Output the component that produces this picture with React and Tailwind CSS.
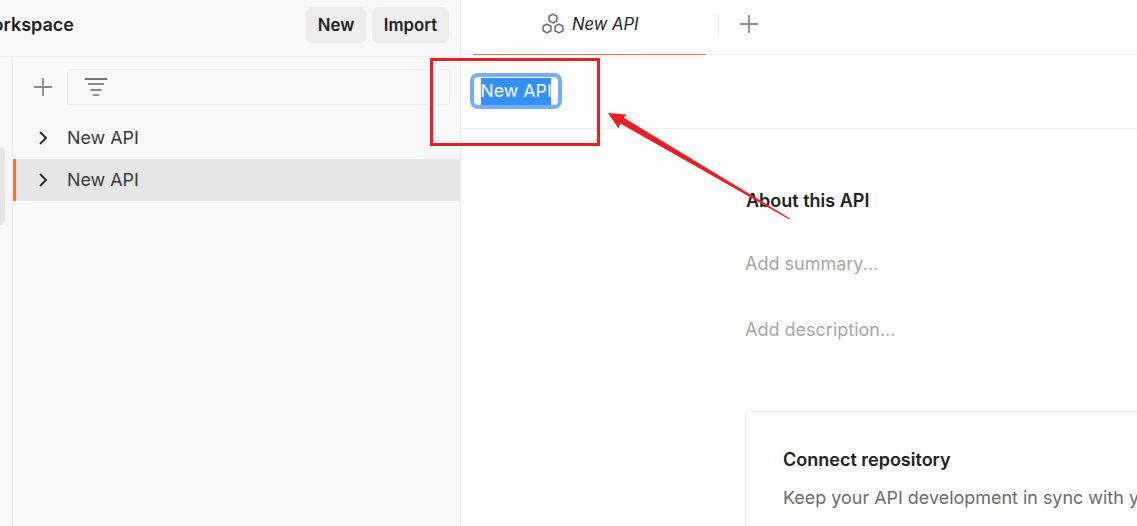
function Plus() {
  return (
    <svg className="block size-5 shrink-0" viewBox="0 0 20 20" fill="none" stroke="#8a8a8a" strokeWidth="1.8">
      <path d="M10 1v18M1 10h18" />
    </svg>
  );
}

function FilterIcon() {
  return (
    <svg className="block h-5 w-[22px]" viewBox="0 0 22 20" fill="#8a8a8a">
      <path d="M0 1h22v2H0z" fill="#747474" />
      <path d="M3 6h16v2H3zM5.5 12h11v2h-11z" />
      <path d="M8 17.3h6V19H8z" />
    </svg>
  );
}

function ApiIcon() {
  return (
    <svg className="block h-[21px] w-[22px] shrink-0" viewBox="0 0 22 21" fill="none" stroke="#6b6b6b" strokeWidth="1.5">
      <path d="M11 1.2l3.9 2.1v4.4L11 9.8 7.1 7.7V3.3z" />
      <path d="M5 11.2l3.9 2.1v4.4L5 19.8l-3.9-2.1v-4.4z" />
      <path d="M17 11.2l3.9 2.1v4.4L17 19.8l-3.9-2.1v-4.4z" />
    </svg>
  );
}

function TreeRow({ label, selected }) {
  return (
    <div
      className={
        selected
          ? "flex h-[42px] items-center border-l-[3px] border-[#ff6c37] bg-[#e6e6e6] pl-[22px]"
          : "flex h-[42px] items-center pl-[25px]"
      }
    >
      <svg className="block h-[14px] w-[10px]" viewBox="0 0 10 14" fill="none" stroke="#2a2a2a" strokeWidth="1.9">
        <path d="M2 1l6 6-6 6" />
      </svg>
      <span className="ml-[19px] text-[17.9px] text-[#3a3a3a]">{label}</span>
    </div>
  );
}

function Sidebar() {
  return (
    <aside className="flex w-[461px] shrink-0 flex-col border-r border-[#ededed] bg-[#f9f9f9]">
      <header className="flex h-[57px] shrink-0 items-start justify-between border-b border-[#ededed] pr-[11px] pt-[7px]">
        <div className="flex h-9 w-[74px] items-center justify-end overflow-hidden whitespace-nowrap font-semibold">
          orkspace
        </div>
        <div className="flex gap-1.5">
          <button className="h-9 w-[60px] rounded-md bg-[#ededed] text-[16.8px] font-semibold">New</button>
          <button className="h-9 w-[77px] rounded-md bg-[#ededed] text-[16.8px] font-semibold">Import</button>
        </div>
      </header>
      <div className="flex grow">
        <div className="w-[13px] shrink-0 border-r border-[#ededed] pt-[90px]">
          <div className="h-[78px] w-[5px] rounded-r-md bg-[#e6e6e6]" />
        </div>
        <div className="grow">
          <div className="flex h-[60px] items-center pl-5 pr-[10px]">
            <Plus />
            <div className="ml-[14px] flex h-9 grow items-center rounded-[3px] border border-[#ededed] pl-[17px]">
              <FilterIcon />
            </div>
          </div>
          <TreeRow label="New API" />
          <TreeRow label="New API" selected />
        </div>
      </div>
    </aside>
  );
}

function Editor() {
  return (
    <main className="flex min-w-0 grow flex-col bg-white">
      <div className="flex h-[55px] shrink-0 border-b border-[#ededed] pl-3">
        <div className="-mb-px flex w-[233px] items-start border-b border-[#ff6c37] pl-[69px] pt-[13px]">
          <ApiIcon />
          <span className="-mt-px ml-2 h-6 text-[16.6px] leading-6 italic">New API</span>
        </div>
        <div className="ml-3 mt-[13px] h-6 w-px bg-[#ededed]" />
        <div className="ml-5 mt-[14px]">
          <Plus />
        </div>
      </div>
      <div className="flex h-[74px] shrink-0 items-start border-b border-[#ededed] pl-[9px] pt-[18px]">
        <div className="flex h-9 w-[92px] items-center justify-center rounded-lg border-4 border-[#74aef6]">
          <span className="flex h-[27px] w-[70px] items-center justify-center whitespace-nowrap bg-[#3390ff] text-[17.8px] text-white">
            New API
          </span>
        </div>
      </div>
      <div className="flex grow flex-col overflow-hidden pl-[284px] pt-[60px]">
        <h2 className="h-6 pl-px font-semibold leading-6">About this API</h2>
        <p className="mt-[39px] h-6 leading-6 text-[#a6a6a6]">Add summary...</p>
        <p className="mt-[42px] h-6 leading-6 text-[#a6a6a6]">Add description...</p>
        <section className="mt-[69px] h-[180px] w-[600px] shrink-0 rounded-[5px] border border-[#ededed] pl-[37px] pt-9">
          <h3 className="h-6 font-semibold leading-6">Connect repository</h3>
          <p className="mt-[14px] h-6 whitespace-nowrap text-[17.95px] leading-6 text-[#6b6b6b]">
            Keep your API development in sync with your repository
          </p>
        </section>
      </div>
    </main>
  );
}

export default function App() {
  return (
    <div className="relative flex h-[526px] w-[1137px] overflow-hidden font-['Inter',sans-serif] text-[18px] leading-6 text-[#212121]">
      <Sidebar />
      <Editor />
      <div className="absolute left-[430px] top-[58px] h-[88px] w-[170px] border-[3px] border-[#ed1c24]" />
      <svg className="absolute left-[600px] top-[105px] h-[120px] w-[200px]" viewBox="600 105 200 120" fill="#ed1c24">
        <path d="M608 113L626.5 114.5L623.8 117.8L790 218.5L789 219.3L620.3 123.4L618.5 128.5Z" />
      </svg>
    </div>
  );
}
